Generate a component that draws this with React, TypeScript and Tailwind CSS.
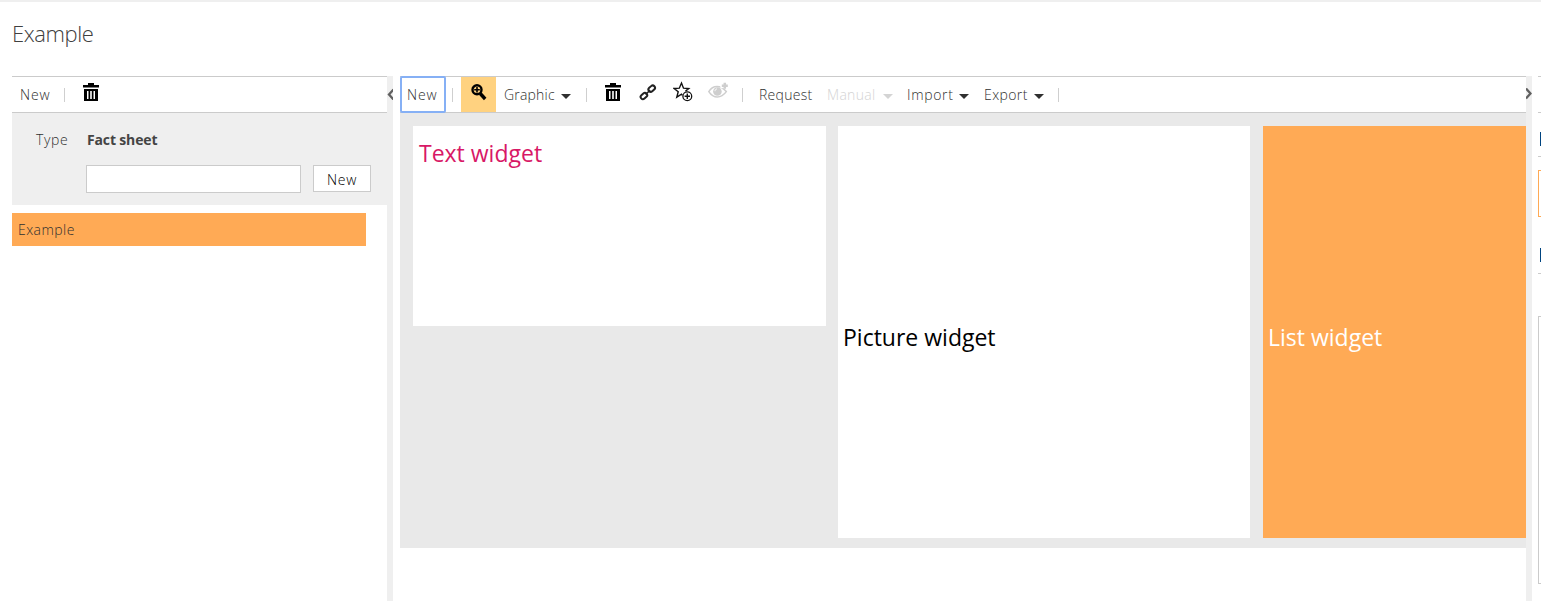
import React from 'react';

const TrashIcon = ({ className = '' }: { className?: string }) => (
  <svg className={`shrink-0 ${className}`} width="16" height="18" viewBox="0 0 16 18" fill="#000">
    <path d="M5 0h6v2h5v2.4H0V2h5z" />
    <path fillRule="evenodd" d="M1 6h14v12H1zM4 8v8h1.5V8zm3.2 0v8h1.6V8zm3.3 0v8H12V8z" />
  </svg>
);

const ZoomIcon = () => (
  <svg className="mt-[7px] shrink-0" width="16" height="17" viewBox="0 0 16 17" fill="none" stroke="#000">
    <circle cx="6" cy="5.8" r="4.5" strokeWidth="2.4" />
    <path d="M6 3v5.6M3.2 5.8h5.6" strokeWidth="1.6" />
    <path d="M9.2 9.5l5 5.5" strokeWidth="3.4" />
  </svg>
);

const LinkIcon = ({ className = '' }: { className?: string }) => (
  <svg className={`shrink-0 ${className}`} width="18" height="17" viewBox="0 0 18 17" fill="none" stroke="#222" strokeWidth="2">
    <rect x="-3.6" y="-2.3" width="7.2" height="4.6" rx="2.3" transform="translate(12.7 4.7) rotate(-42)" />
    <rect x="-3.6" y="-2.3" width="7.2" height="4.6" rx="2.3" transform="translate(4.9 12) rotate(-42)" />
    <path d="M6.5 10.5l4.7-4.4" strokeWidth="1.6" />
  </svg>
);

const StarIcon = ({ className = '' }: { className?: string }) => (
  <svg className={`shrink-0 ${className}`} width="20" height="21" viewBox="0 0 20 21" fill="none" stroke="#111">
    <path d="M9.4 14.4L8.5 13.2 3.8 16.2 5.2 10.8 1.1 7.5l5.2-.3L8.5 2l2 5.2 5.2.3-3.2 2.6" strokeWidth="1.4" />
    <circle cx="14.3" cy="15.2" r="4.4" strokeWidth="1.3" />
    <path d="M14.3 12.5v5.4M11.6 15.2H17" strokeWidth="1.4" />
  </svg>
);

const EyeIcon = ({ className = '' }: { className?: string }) => (
  <svg className={`shrink-0 ${className}`} width="21" height="17" viewBox="0 0 21 17" fill="none" stroke="#cecece">
    <path d="M.8 9.6C5 2.8 12.5 2.8 18.3 9.6 13 16.8 5.5 16.8.8 9.6z" strokeWidth="1.5" />
    <circle cx="9.4" cy="9.5" r="4.3" fill="#cecece" stroke="none" />
    <path d="M7 9.2c0-1.5 1-2.2 2-2.3" stroke="#fff" />
    <path d="M12.4 4.7h4" stroke="#fff" strokeWidth="3" />
    <path d="M16.8.8v6M13.8 3.8h6" strokeWidth="2.5" />
  </svg>
);

const Caret = ({ className = '' }: { className?: string }) => (
  <svg className={`mt-[17px] shrink-0 ${className}`} width="10" height="5" viewBox="0 0 10 5" fill="currentColor">
    <path d="M0 0h10L5 5z" />
  </svg>
);

const Divider = ({ className = '' }: { className?: string }) => (
  <div className={`mt-[11px] h-[14px] w-px shrink-0 bg-[#cfcfcf] ${className}`} />
);

function LeftPanel() {
  return (
    <aside className="w-[375px] shrink-0">
      <div className="flex h-[37px] items-start border-y border-[#cbcbcb]">
        <span className="ml-2 mt-2 w-[44px] tracking-[0.8px]">New</span>
        <Divider />
        <TrashIcon className="ml-[18px] mt-[6px]" />
      </div>
      <div className="h-[92px] bg-[#efefef]">
        <div className="flex pt-[17px]">
          <span className="ml-6 w-[51px] tracking-[0.6px]">Type</span>
          <span className="font-bold tracking-[-0.15px] text-[#444]">Fact sheet</span>
        </div>
        <div className="mt-[15px] flex items-start pl-[74px]">
          <input className="h-7 w-[215px] border border-[#cbcbcb] bg-white outline-none" />
          <button className="ml-3 h-[27px] w-[58px] border border-[#cbcbcb] bg-white pt-[3px] tracking-[0.7px] text-black">New</button>
        </div>
      </div>
      <div className="mt-2 h-[33px] w-[354px] bg-[#ffaa55] pl-[6px] pt-[7px] tracking-[0.45px]">Example</div>
    </aside>
  );
}

function Toolbar() {
  return (
    <div className="flex h-[37px] items-start border-y border-[#cbcbcb]">
      <button className="-mt-px h-[37px] w-[46px] shrink-0 rounded-[2px] border-2 border-[#86b0f5] pl-[5px] text-left tracking-[0.8px]">New</button>
      <Divider className="ml-[6px]" />
      <div className="ml-2 flex h-[35px] w-[35px] shrink-0 justify-center bg-[#ffd280]">
        <ZoomIcon />
      </div>
      <span className="ml-2 mt-2 w-[57px] tracking-[0.2px]">Graphic</span>
      <Caret />
      <Divider className="ml-[15px]" />
      <TrashIcon className="ml-[18px] mt-[6px]" />
      <LinkIcon className="ml-[18px] mt-[7px]" />
      <StarIcon className="ml-4 mt-1" />
      <EyeIcon className="ml-[15px] mt-[5px]" />
      <Divider className="ml-[13px]" />
      <span className="ml-4 mt-2 w-[68px] tracking-[0.3px]">Request</span>
      <span className="mt-2 w-[56px] tracking-[0.3px] text-[#d4d4d4]">Manual</span>
      <Caret className="text-[#d4d4d4]" />
      <span className="ml-[14px] mt-2 w-[52px] tracking-[0.65px]">Import</span>
      <Caret />
      <span className="ml-[15px] mt-2 w-[50px] tracking-[0.4px]">Export</span>
      <Caret />
      <Divider className="ml-[14px]" />
    </div>
  );
}

function Board() {
  return (
    <div className="flex h-[435px] items-start bg-[#e9e9e9] pl-[13px] pt-[13px] text-[23px] font-normal leading-8">
      <div className="h-[200px] w-[413px] shrink-0 bg-white pl-[6px] pt-[11px] text-[#d81866]">Text widget</div>
      <div className="ml-3 flex h-[412px] w-[412px] shrink-0 items-center bg-white pl-[5px] pt-[10px] text-black">Picture widget</div>
      <div className="ml-[13px] flex h-[412px] w-[263px] shrink-0 items-center bg-[#ffaa55] pl-[5px] pt-[10px] text-white">List widget</div>
    </div>
  );
}

const Splitter = ({ side }: { side: 'left' | 'right' }) => (
  <div className="w-[6px] shrink-0 bg-[#efefef] pt-[12px]">
    <svg width="6" height="12" viewBox="0 0 6 12" fill="none" stroke="#606060" strokeWidth="2.3">
      <path d={side === 'left' ? 'M6.5 1.5L2 6.5 6.5 11.5' : 'M0 .5L4.5 5.5 0 10.5'} />
    </svg>
  </div>
);

function RightPanel() {
  return (
    <aside className="ml-[6px] w-[3px] shrink-0 overflow-hidden">
      <div className="h-[37px] border-y border-[#cbcbcb]" />
      <div className="h-[44px] border-b border-[#cbcbcb] pl-[2px] pt-[19px]">
        <div className="h-[14px] bg-[#004480]" />
      </div>
      <div className="mt-[13px] h-[47px] w-20 border border-[#ffaa55]" />
      <div className="mt-[31px] h-[26px] border-b border-[#cbcbcb] pl-[2px]">
        <div className="h-[14px] bg-[#004480]" />
      </div>
      <div className="mt-[42px] h-[268px] w-20 border border-[#cbcbcb]" />
    </aside>
  );
}

export default function App() {
  return (
    <div className="flex h-[601px] w-[1541px] flex-col overflow-hidden border-t-2 border-[#efefef] bg-white font-['Open_Sans','Noto_Sans',sans-serif] text-[14px] font-light leading-5 text-[#303030]">
      <h1 className="h-[74px] shrink-0 pl-3 pt-[15px] text-[22px] leading-8 tracking-[-0.4px] text-[#404040]">Example</h1>
      <div className="flex flex-1 pl-3">
        <LeftPanel />
        <Splitter side="left" />
        <main className="ml-[7px] w-[1126px] shrink-0">
          <Toolbar />
          <Board />
        </main>
        <Splitter side="right" />
        <RightPanel />
      </div>
    </div>
  );
}
